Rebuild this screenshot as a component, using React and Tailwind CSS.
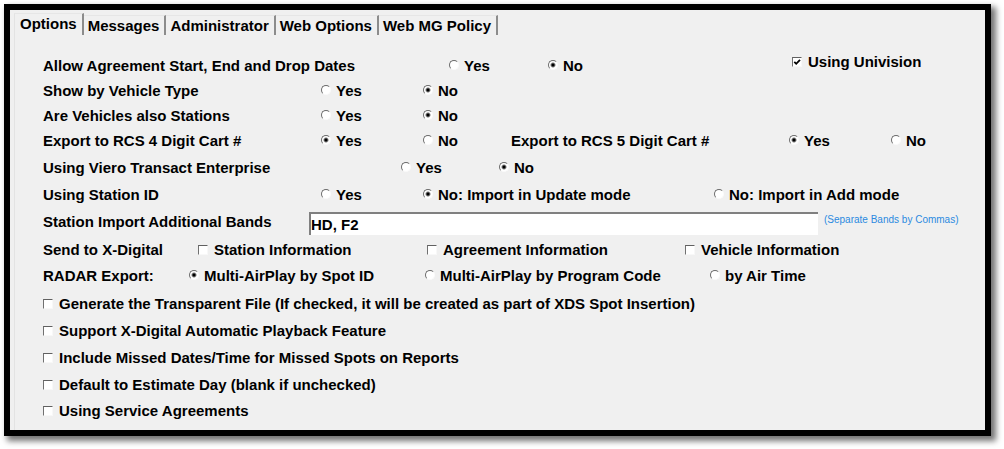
import { useState } from "react";

const TABS = ["Options", "Messages", "Administrator", "Web Options", "Web MG Policy"];

function Tabs() {
  const [active, setActive] = useState("Options");
  return (
    <div role="tablist" className="flex items-end pt-[3px] pl-1">
      {TABS.map((tab) => (
        <button
          key={tab}
          type="button"
          role="tab"
          aria-selected={active === tab}
          onClick={() => setActive(tab)}
          className={
            active === tab
              ? "h-[22px] border-t border-r-2 border-l border-t-[#e6e6e6] border-r-[#8c8c8c] border-l-[#e3e3e3] px-[5px] pb-0.5 leading-[18px]"
              : "h-5 border-t border-r-2 border-t-[#e6e6e6] border-r-[#8c8c8c] pr-[5px] pl-1 leading-[18px]"
          }
        >
          {tab}
        </button>
      ))}
    </div>
  );
}

function Radio({ name, label, checked, className }) {
  return (
    <label className={`flex shrink-0 items-center gap-[5px] whitespace-nowrap ${className || ""}`}>
      <input
        type="radio"
        name={name}
        defaultChecked={checked}
        className="mb-0.5 size-2.5 shrink-0 appearance-none rounded-full border border-t-[#6a6a6a] border-r-[#fafafa] border-b-[#fafafa] border-l-[#6a6a6a] bg-white checked:bg-[radial-gradient(circle,#000_1px,#fff_3px)]"
      />
      {label}
    </label>
  );
}

function Check({ label, checked, className }) {
  return (
    <label className={`flex shrink-0 items-center gap-1.5 whitespace-nowrap ${className || ""}`}>
      <span className="grid shrink-0">
        <input
          type="checkbox"
          defaultChecked={checked}
          className="peer col-start-1 row-start-1 size-2.5 appearance-none border border-t-[#606060] border-r-[#f8f8f8] border-b-[#f8f8f8] border-l-[#707070] bg-white"
        />
        <svg
          viewBox="0 0 10 10"
          aria-hidden="true"
          className="pointer-events-none invisible col-start-1 row-start-1 size-2.5 peer-checked:visible"
        >
          <path d="M2.3 4.8 4.2 6.8 8 2.8" fill="none" stroke="#000" strokeWidth="1.8" />
        </svg>
      </span>
      {label}
    </label>
  );
}

function RadioRow({ id, label, labelWidth, children, className }) {
  return (
    <div
      role="radiogroup"
      aria-labelledby={id}
      className={`flex items-center ${className || ""}`}
    >
      <span id={id} className={`shrink-0 whitespace-nowrap ${labelWidth}`}>
        {label}
      </span>
      {children}
    </div>
  );
}

export default function App() {
  return (
    <div className="bg-white pt-1 pr-[13px] pb-[13px] pl-1 font-['Liberation_Sans',Arial,sans-serif] text-[15px] leading-5 font-bold text-black">
      <main className="border-[6px] border-black bg-[#f0f0f0] shadow-[4px_4px_6px_1px_rgba(0,0,0,0.55)]">
        <Tabs />
        <form className="ml-1 border-l border-[#e3e3e3] pt-[18px] pb-[7px] pl-7">
          <div className="flex h-[25px]">
            <RadioRow id="dates" label="Allow Agreement Start, End and Drop Dates" labelWidth="w-[406px]">
              <Radio name="dates" label="Yes" className="w-[99px]" />
              <Radio name="dates" label="No" checked className="w-[244px]" />
            </RadioRow>
            <Check label="Using Univision" checked className="self-start leading-[18px]" />
          </div>
          <RadioRow id="vehicle-type" label="Show by Vehicle Type" labelWidth="w-[278px]" className="h-[25px]">
            <Radio name="vehicle-type" label="Yes" className="w-[102px]" />
            <Radio name="vehicle-type" label="No" checked />
          </RadioRow>
          <RadioRow id="stations" label="Are Vehicles also Stations" labelWidth="w-[278px]" className="h-[25px]">
            <Radio name="stations" label="Yes" className="w-[102px]" />
            <Radio name="stations" label="No" checked />
          </RadioRow>
          <div className="flex h-[25px]">
            <RadioRow id="rcs4" label="Export to RCS 4 Digit Cart #" labelWidth="w-[278px]">
              <Radio name="rcs4" label="Yes" checked className="w-[102px]" />
              <Radio name="rcs4" label="No" className="w-[88px]" />
            </RadioRow>
            <RadioRow id="rcs5" label="Export to RCS 5 Digit Cart #" labelWidth="w-[278px]">
              <Radio name="rcs5" label="Yes" checked className="w-[102px]" />
              <Radio name="rcs5" label="No" />
            </RadioRow>
          </div>
          <div className="pt-px">
            <RadioRow id="viero" label="Using Viero Transact Enterprise" labelWidth="w-[358px]" className="h-[27px]">
              <Radio name="viero" label="Yes" className="w-[98px]" />
              <Radio name="viero" label="No" checked />
            </RadioRow>
            <RadioRow id="station-id" label="Using Station ID" labelWidth="w-[278px]" className="h-[27px]">
              <Radio name="station-id" label="Yes" className="w-[102px]" />
              <Radio name="station-id" label="No: Import in Update mode" checked className="w-[291px]" />
              <Radio name="station-id" label="No: Import in Add mode" />
            </RadioRow>
            <div className="flex h-[27px] items-center pr-[26px]">
              <label htmlFor="bands" className="w-[266px] shrink-0 whitespace-nowrap">
                Station Import Additional Bands
              </label>
              <input
                id="bands"
                type="text"
                defaultValue="HD, F2"
                className="mt-1 h-[23px] min-w-0 flex-1 border-t-2 border-l-2 border-[#808080] bg-white outline-none"
              />
              <span className="w-[141px] shrink-0 pb-1 pl-1.5 text-[10px] leading-4 font-normal whitespace-nowrap text-[#2b8ae0]">
                (Separate Bands by Commas)
              </span>
            </div>
          </div>
          <div className="pt-0.5">
            <div className="flex h-[26px] items-center" role="group" aria-labelledby="x-digital">
              <span id="x-digital" className="w-[155px] shrink-0 whitespace-nowrap">
                Send to X-Digital
              </span>
              <Check label="Station Information" className="w-[229px]" />
              <Check label="Agreement Information" className="w-[258px]" />
              <Check label="Vehicle Information" />
            </div>
            <RadioRow id="radar" label="RADAR Export:" labelWidth="w-[146px]" className="h-[26px]">
              <Radio name="radar" label="Multi-AirPlay by Spot ID" checked className="w-[236px]" />
              <Radio name="radar" label="Multi-AirPlay by Program Code" className="w-[285px]" />
              <Radio name="radar" label="by Air Time" />
            </RadioRow>
          </div>
          <div className="pt-px">
            <Check
              label="Generate the Transparent File (If checked, it will be created as part of XDS Spot Insertion)"
              className="h-[27px]"
            />
            <Check label="Support X-Digital Automatic Playback Feature" className="h-[27px]" />
            <Check label="Include Missed Dates/Time for Missed Spots on Reports" className="h-[27px]" />
            <Check label="Default to Estimate Day (blank if unchecked)" className="h-[27px]" />
            <Check label="Using Service Agreements" className="h-[25px]" />
          </div>
        </form>
      </main>
    </div>
  );
}
